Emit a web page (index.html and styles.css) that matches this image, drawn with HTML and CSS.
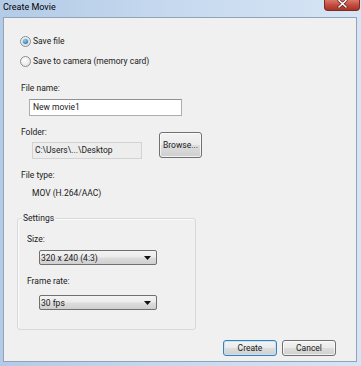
FILE: index.html
```html
<!DOCTYPE html>
<html lang="en">
<head>
    <meta charset="UTF-8">
    <title>Create Movie</title>
    <link rel="stylesheet" href="styles.css">
</head>
<body>
    <div class="window">
        <div class="titlebar">
            <span class="title">Create Movie</span>
            <div class="close">
                <svg width="11" height="8" viewBox="0 0 11 8">
                    <path d="M2 0.5 L9 7 M9 0.5 L2 7" stroke="#5a1c16" stroke-width="3" stroke-linecap="round"/>
                    <path d="M2 0.5 L9 7 M9 0.5 L2 7" stroke="#ffffff" stroke-width="1.6" stroke-linecap="round"/>
                </svg>
            </div>
        </div>

        <div class="client">
            <div class="radio-row"><span class="radio checked"></span>Save file</div>
            <div class="radio-row"><span class="radio"></span>Save to camera (memory card)</div>

            <div class="field-label name-label">File name:</div>
            <div class="textbox">New movie1</div>

            <div class="folder-row">
                <div class="folder-col">
                    <div class="field-label">Folder:</div>
                    <div class="readonly">C:\Users\...\Desktop</div>
                </div>
                <div class="button browse">Browse...</div>
            </div>

            <div class="field-label type-label">File type:</div>
            <div class="field-value">MOV (H.264/AAC)</div>

            <div class="group">
                <span class="group-title">Settings</span>
                <div class="field-label">Size:</div>
                <div class="dropdown">
                    <span>320 x 240 (4:3)</span>
                    <svg width="7" height="4" viewBox="0 0 7 4"><path d="M0 0 H7 L3.5 4 Z" fill="#111"/></svg>
                </div>
                <div class="field-label rate-label">Frame rate:</div>
                <div class="dropdown rate">
                    <span>30 fps</span>
                    <svg width="7" height="4" viewBox="0 0 7 4"><path d="M0 0 H7 L3.5 4 Z" fill="#111"/></svg>
                </div>
            </div>

            <div class="actions">
                <div class="button default">Create</div>
                <div class="button">Cancel</div>
            </div>
        </div>
    </div>
</body>
</html>
```

FILE: styles.css
```css
body {
    margin: 0;
    font-family: Roboto, 'Liberation Sans', sans-serif;
    font-size: 8.5px;
    color: #1a1a1a;
    background: #c3d7ee;
}
.window {
    width: 361px;
    height: 366px;
    display: flex;
    flex-direction: column;
    overflow: hidden;
    background: linear-gradient(90deg, #b3cbe7 0%, #c9dbf0 55%, #d6e5f5 100%);
}
.titlebar {
    height: 17px;
    flex: none;
    display: flex;
    justify-content: space-between;
    align-items: flex-start;
}
.title {
    font-size: 9px;
    line-height: 15px;
    padding-left: 3px;
    color: #000;
}
.close {
    width: 34px;
    height: 10px;
    margin-right: 1px;
    border: 1px solid #7d2a23;
    border-top: none;
    border-radius: 0 0 4px 4px;
    background: linear-gradient(#d97a6c, #c44c3e 50%, #a83425);
    display: flex;
    justify-content: center;
    align-items: flex-start;
}
.client {
    flex: 1;
    margin: 0 4px 4px 3px;
    padding: 16px 20px 0 13px;
    border: 1px solid #91a3b8;
    background: #f0f0f0;
}
.radio-row {
    display: flex;
    align-items: center;
    height: 14px;
    padding-left: 3px;
}
.radio-row + .radio-row {
    margin-top: 6px;
}
.radio {
    width: 9px;
    height: 9px;
    margin-right: 2px;
    border: 1px solid #8a8c8f;
    border-radius: 50%;
    background: radial-gradient(circle at 40% 35%, #ffffff, #dcdcdc);
    display: flex;
    justify-content: center;
    align-items: center;
}
.radio.checked::after {
    content: "";
    width: 5px;
    height: 5px;
    border-radius: 50%;
    background: radial-gradient(circle at 40% 35%, #8ccaf2, #1a5e94);
    box-shadow: 0 0 0 1px #c7dff0;
}
.field-label {
    line-height: 14px;
    margin-left: 4px;
}
.name-label {
    margin-top: 13px;
}
.textbox {
    width: 153px;
    height: 17px;
    box-sizing: border-box;
    margin: 4px 0 0 12px;
    padding-left: 3px;
    line-height: 15px;
    background: #fff;
    border: 1px solid #abadb3;
    border-top-color: #8e9197;
}
.folder-row {
    display: flex;
    margin-top: 9px;
}
.readonly {
    width: 110px;
    height: 17px;
    box-sizing: border-box;
    margin: 3px 0 0 15px;
    padding-left: 2px;
    line-height: 15px;
    background: #ededed;
    border: 1px solid #d2d2d2;
}
.button {
    box-sizing: border-box;
    display: flex;
    justify-content: center;
    align-items: center;
    border: 1px solid #707070;
    border-radius: 3px;
    background: linear-gradient(#f3f3f3 0%, #ebebeb 48%, #dddddd 52%, #cfcfcf 100%);
    box-shadow: inset 0 0 0 1px rgba(255, 255, 255, 0.7);
}
.browse {
    width: 43px;
    height: 26px;
    margin: 7px 0 0 17px;
}
.type-label {
    margin-top: 9px;
}
.field-value {
    line-height: 14px;
    margin: 4px 0 0 15px;
}
.group {
    position: relative;
    width: 179px;
    height: 112px;
    box-sizing: border-box;
    margin-top: 18px;
    padding: 13px 0 0 5px;
    border: 1px solid #d5dadf;
    border-radius: 3px;
    box-shadow: inset 1px 1px 0 #fafafa;
}
.group-title {
    position: absolute;
    top: -8px;
    left: 4px;
    padding: 0 1px;
    line-height: 14px;
    background: #f0f0f0;
}
.dropdown {
    width: 118px;
    height: 15px;
    box-sizing: border-box;
    margin: 4px 0 0 16px;
    padding: 0 5px 0 1px;
    display: flex;
    justify-content: space-between;
    align-items: center;
    border: 1px solid #707070;
    border-radius: 2px;
    background: linear-gradient(#f3f3f3 0%, #ebebeb 48%, #dddddd 52%, #cfcfcf 100%);
}
.rate-label {
    margin-top: 9px;
}
.dropdown.rate {
    margin-top: 7px;
}
.actions {
    display: flex;
    justify-content: flex-end;
    gap: 5px;
    margin-top: 10px;
}
.actions .button {
    width: 54px;
    height: 16px;
}
.button.default {
    border-color: #3c7fb1;
    box-shadow: inset 0 0 0 1px #bfe3f8;
}
```
